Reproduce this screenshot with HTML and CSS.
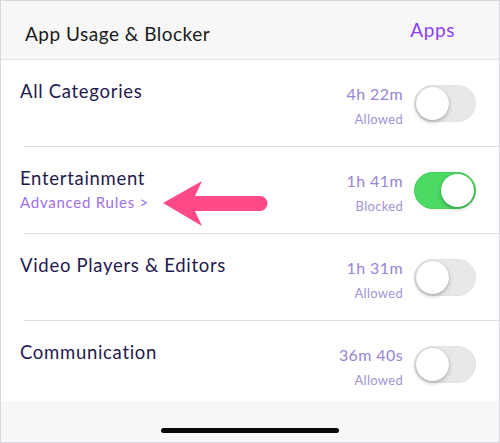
FILE: index.html
```html
<!DOCTYPE html>
<html>
  <head>
    <meta charset="UTF-8" />
    <meta name="viewport" content="width=device-width, initial-scale=1.0" />
    <title>App Usage &amp; Blocker</title>
    <link rel="stylesheet" href="styles.css">
  </head>
  <body>
    <div class="screen">
      <div class="top-bar">
        <div class="top-title">App Usage &amp; Blocker</div>
        <div class="top-link">Apps</div>
      </div>

      <div class="row">
        <div class="row-left">
          <div class="row-title">All Categories</div>
        </div>
        <div class="row-meta">
          <div class="row-time">4h 22m</div>
          <div class="row-status">Allowed</div>
        </div>
        <div class="toggle"><div class="knob"></div></div>
      </div>

      <div class="row">
        <div class="row-left">
          <div class="row-title">Entertainment</div>
          <div class="row-sub">Advanced Rules &gt;</div>
        </div>
        <div class="row-meta">
          <div class="row-time">1h 41m</div>
          <div class="row-status">Blocked</div>
        </div>
        <div class="toggle on"><div class="knob"></div></div>
        <!-- callout arrow pointing at the advanced rules link -->
        <svg class="arrow" width="110" height="50" viewBox="0 0 110 50">
          <path d="M2 24 L41 2 L34 17 L99 17 A7.5 7.5 0 0 1 99 32 L34 32 L41 47 Z" fill="#ff4a86" />
        </svg>
      </div>

      <div class="row">
        <div class="row-left">
          <div class="row-title">Video Players &amp; Editors</div>
        </div>
        <div class="row-meta">
          <div class="row-time">1h 31m</div>
          <div class="row-status">Allowed</div>
        </div>
        <div class="toggle"><div class="knob"></div></div>
      </div>

      <div class="row last">
        <div class="row-left">
          <div class="row-title">Communication</div>
        </div>
        <div class="row-meta">
          <div class="row-time">36m 40s</div>
          <div class="row-status">Allowed</div>
        </div>
        <div class="toggle"><div class="knob"></div></div>
      </div>

      <div class="bottom">
        <div class="home-bar"></div>
      </div>
    </div>
  </body>
</html>
```

FILE: styles.css
```css
body {
  margin: 0;
  background-color: #fff;
  font-family: "Lato", "Open Sans", sans-serif;
}
.screen {
  width: 500px;
  height: 443px;
  box-sizing: border-box;
  border: 1px solid #d8d8dc;
  display: flex;
  flex-direction: column;
  overflow: hidden;
}
.top-bar {
  height: 58px;
  flex-shrink: 0;
  background-color: #f7f7f7;
  border-bottom: 1px solid #e1e0e8;
  display: flex;
  align-items: center;
  justify-content: space-between;
  padding: 0 44px 0 24px;
}
.top-title {
  font-size: 19px;
  color: #1a1a1a;
  letter-spacing: 0.5px;
  margin-top: 6px;
}
.top-link {
  font-size: 19px;
  color: #8c3ff2;
  letter-spacing: 0.6px;
  margin-top: -2px;
}
.row {
  position: relative;
  height: 87px;
  flex-shrink: 0;
  display: flex;
  align-items: flex-start;
  padding: 0 23px 0 19px;
}
.row::after {
  content: "";
  position: absolute;
  left: 23px;
  right: 0;
  bottom: 0;
  height: 1px;
  background-color: #dfdfe3;
}
.row.last {
  height: 80px;
}
.row.last::after {
  display: none;
}
.row-left {
  flex: 1;
  padding-top: 19px;
}
.row-title {
  font-size: 18.5px;
  color: #1f1a4d;
  letter-spacing: 0.7px;
  line-height: 24px;
}
.row-sub {
  font-size: 15px;
  color: #a070e8;
  letter-spacing: 0.75px;
  line-height: 20px;
  margin-top: 2px;
}
.row-meta {
  text-align: right;
  padding-top: 23px;
  margin-right: 11px;
}
.row-time {
  font-size: 16px;
  color: #9a84d2;
  letter-spacing: 0.4px;
  line-height: 22px;
}
.row-status {
  font-size: 13px;
  color: #a592d6;
  letter-spacing: 0.3px;
  line-height: 18px;
  margin-top: 5px;
}
.toggle {
  margin-top: 25px;
  width: 62px;
  height: 37px;
  box-sizing: border-box;
  border-radius: 19px;
  background-color: #e8e8e9;
  border: 1px solid #e2e2e2;
  position: relative;
}
.toggle .knob {
  position: absolute;
  top: 1px;
  left: 1px;
  width: 33px;
  height: 33px;
  border-radius: 50%;
  background-color: #fff;
  box-shadow: 0 2px 4px rgba(0, 0, 0, 0.25), 0 0 1px rgba(0, 0, 0, 0.2);
}
.toggle.on {
  background-color: #4cd964;
  border-color: #44d05a;
}
.toggle.on .knob {
  left: auto;
  right: 1px;
}
.arrow {
  position: absolute;
  left: 160px;
  top: 32px;
}
.bottom {
  flex: 1;
  background-color: #f7f7f7;
  display: flex;
  align-items: flex-end;
  justify-content: center;
  padding-bottom: 9px;
}
.home-bar {
  width: 178px;
  height: 5px;
  border-radius: 3px;
  background-color: #0a0a0a;
}
```
